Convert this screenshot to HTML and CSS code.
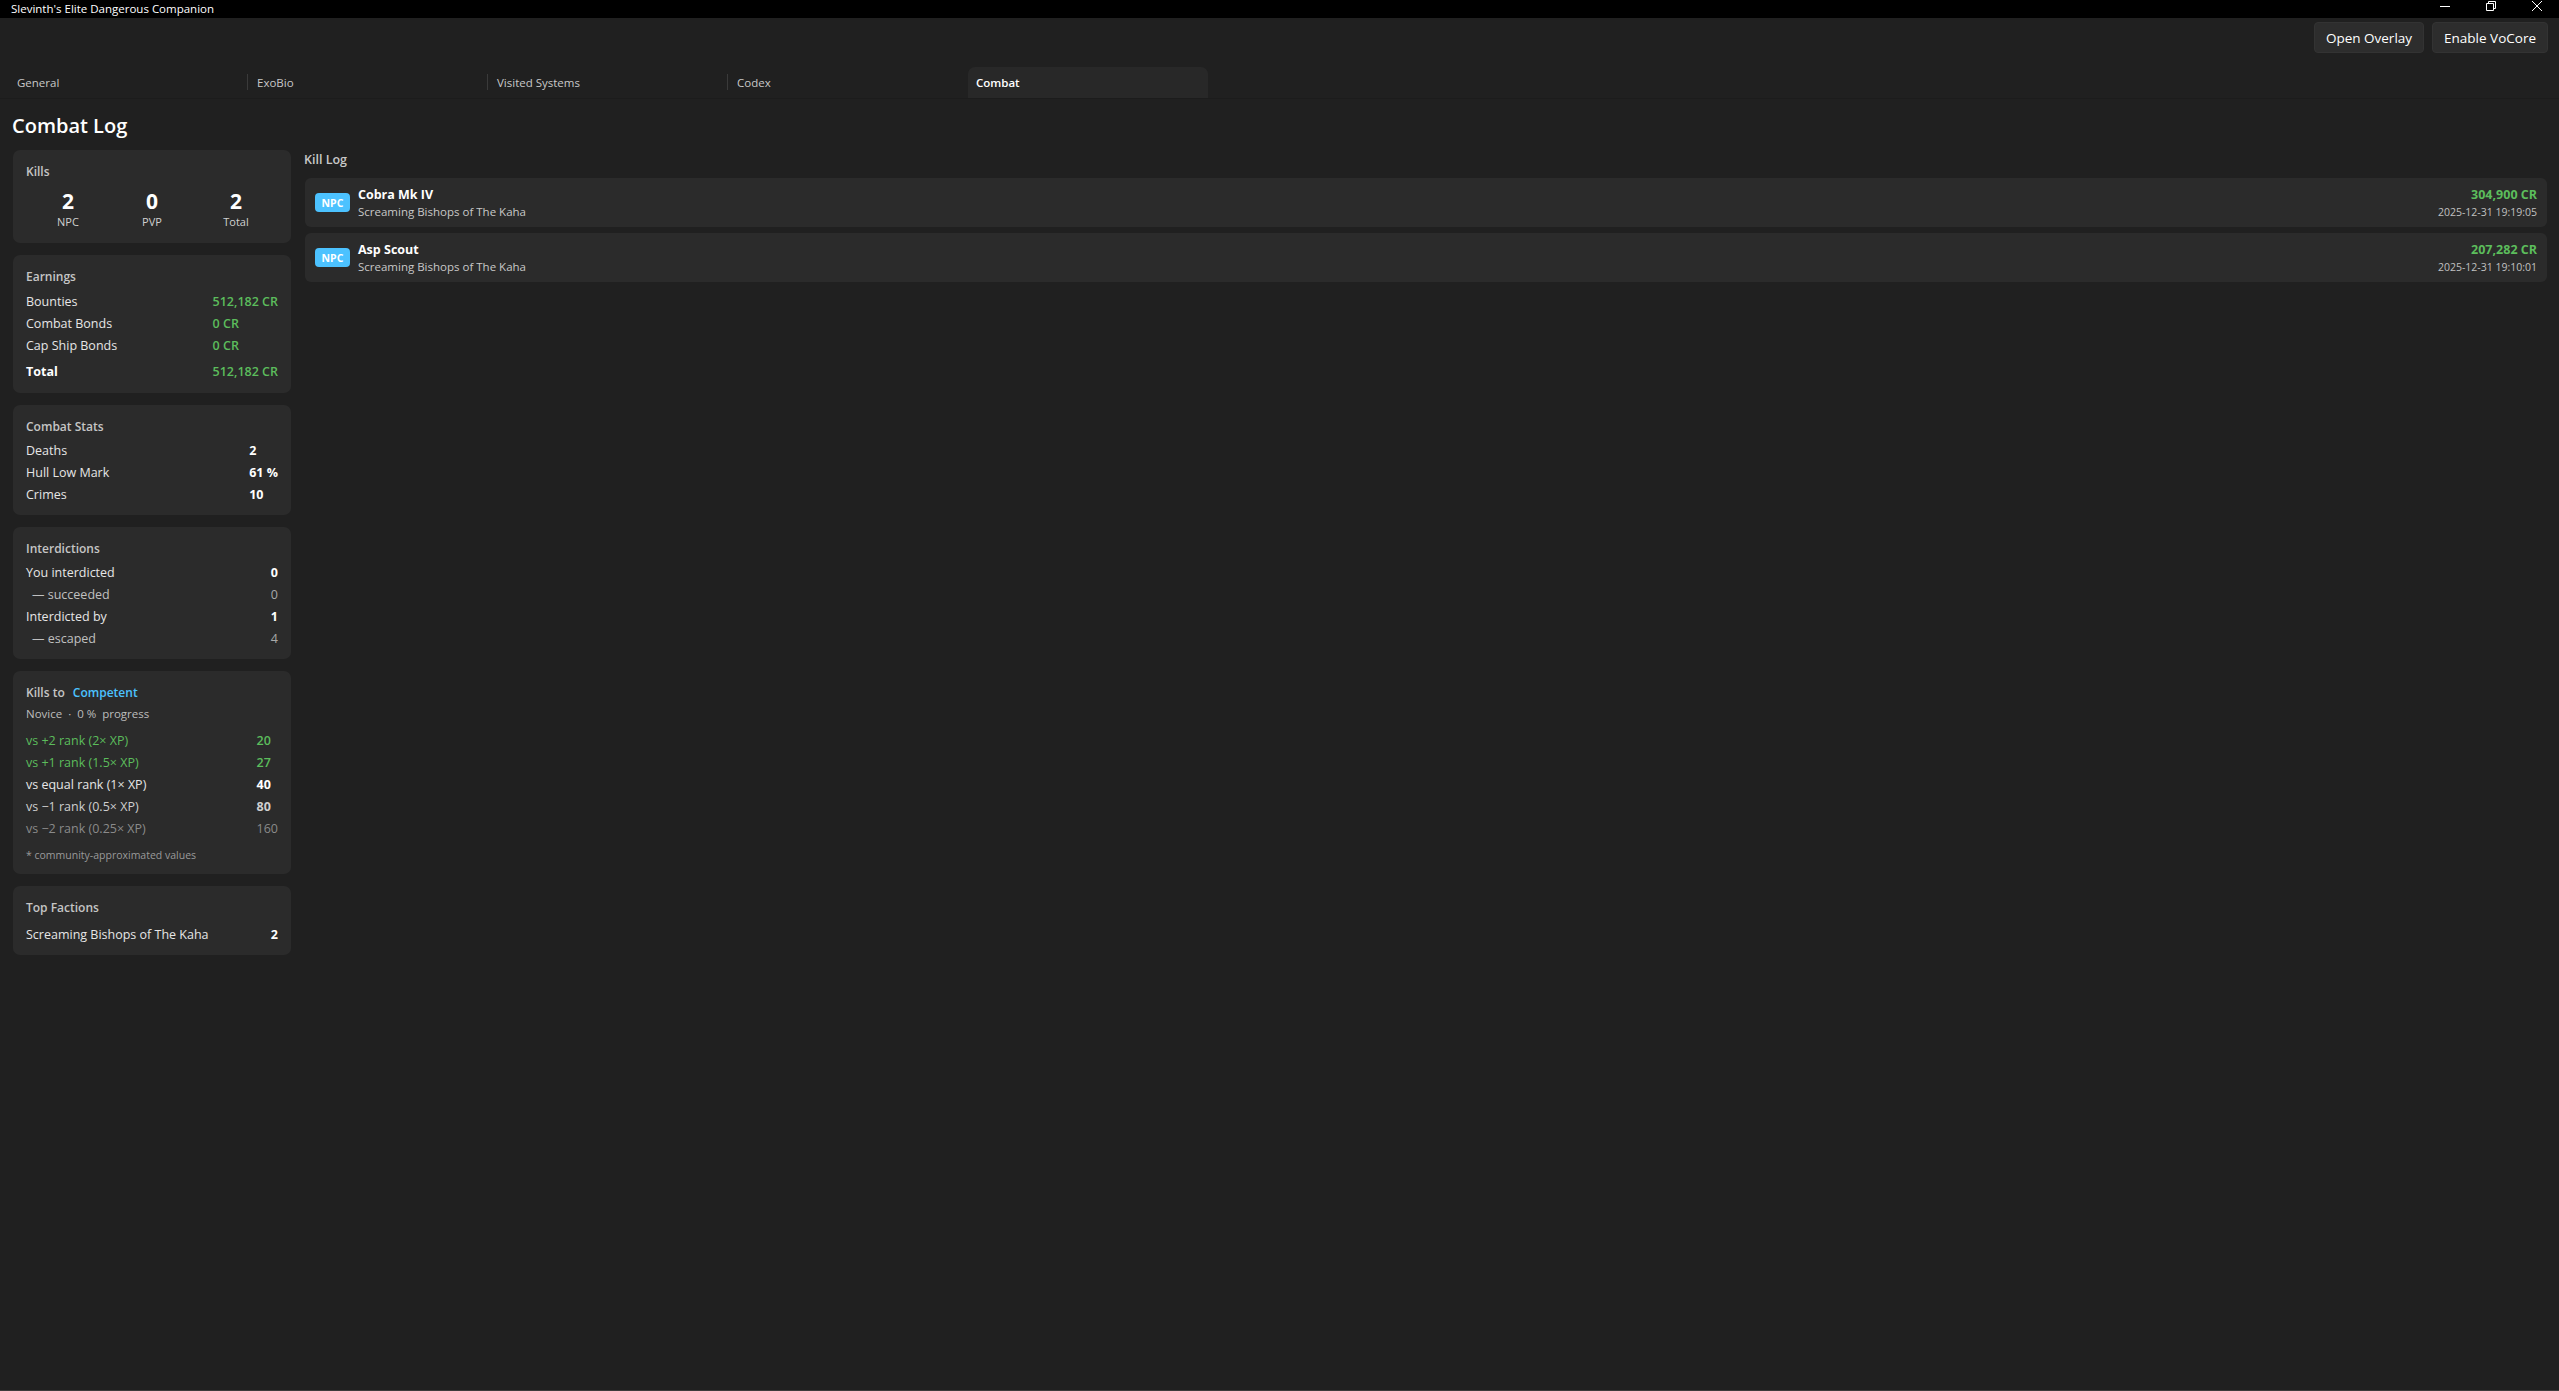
FILE: index.html
```html
<!DOCTYPE html>
<html lang="en">
<head>
<meta charset="utf-8">
<title>Slevinth's Elite Dangerous Companion</title>
<link rel="stylesheet" href="styles.css">
</head>
<body>
<div class="window">
  <div class="titlebar">
    <span class="app-title">Slevinth's Elite Dangerous Companion</span>
    <div class="win-controls">
      <svg class="wc" width="12" height="12" viewBox="0 0 12 12"><path d="M1 6.5H11" stroke="#fff" stroke-width="1"/></svg>
      <svg class="wc" width="12" height="12" viewBox="0 0 12 12"><path d="M1.5 3.5H8.5V10.5H1.5Z M3.5 3.5V1.5H10.5V8.5H8.5" fill="none" stroke="#fff" stroke-width="1"/></svg>
      <svg class="wc" width="12" height="12" viewBox="0 0 12 12"><path d="M1 1L11 11M11 1L1 11" stroke="#fff" stroke-width="1"/></svg>
    </div>
  </div>

  <div class="toolbar">
    <button class="btn">Open Overlay</button>
    <button class="btn">Enable VoCore</button>
  </div>

  <div class="tabstrip">
    <div class="tab">General</div>
    <div class="tab sep">ExoBio</div>
    <div class="tab sep">Visited Systems</div>
    <div class="tab sep">Codex</div>
    <div class="tab active">Combat</div>
  </div>

  <main class="content">
    <h1 class="page-title">Combat Log</h1>
    <div class="columns">
      <aside class="side">
        <section class="card">
          <div class="card-title">Kills</div>
          <div class="kills">
            <div class="kstat"><div class="knum">2</div><div class="klabel">NPC</div></div>
            <div class="kstat"><div class="knum">0</div><div class="klabel">PVP</div></div>
            <div class="kstat"><div class="knum">2</div><div class="klabel">Total</div></div>
          </div>
        </section>

        <section class="card earnings">
          <div class="card-title">Earnings</div>
          <div class="grid">
            <span>Bounties</span><span class="v green">512,182 CR</span>
            <span>Combat Bonds</span><span class="v green">0 CR</span>
            <span>Cap Ship Bonds</span><span class="v green">0 CR</span>
            <span class="b total">Total</span><span class="v green b total">512,182 CR</span>
          </div>
        </section>

        <section class="card">
          <div class="card-title">Combat Stats</div>
          <div class="grid">
            <span>Deaths</span><span class="v b">2</span>
            <span>Hull Low Mark</span><span class="v b">61 %</span>
            <span>Crimes</span><span class="v b">10</span>
          </div>
        </section>

        <section class="card">
          <div class="card-title">Interdictions</div>
          <div class="grid right">
            <span>You interdicted</span><span class="v b">0</span>
            <span class="sub">— succeeded</span><span class="v dim">0</span>
            <span>Interdicted by</span><span class="v b">1</span>
            <span class="sub">— escaped</span><span class="v dim">4</span>
          </div>
        </section>

        <section class="card ranks-card">
          <div class="card-title">Kills to <span class="rank">Competent</span></div>
          <div class="subtitle">Novice &nbsp;·&nbsp; 0 % &nbsp;progress</div>
          <div class="grid ranks">
            <span class="green">vs +2 rank (2× XP)</span><span class="v green b">20</span>
            <span class="green">vs +1 rank (1.5× XP)</span><span class="v green b">27</span>
            <span>vs equal rank (1× XP)</span><span class="v b">40</span>
            <span class="lgrey">vs −1 rank (0.5× XP)</span><span class="v lgrey b">80</span>
            <span class="dgrey">vs −2 rank (0.25× XP)</span><span class="v dgrey">160</span>
          </div>
          <div class="footnote">* community-approximated values</div>
        </section>

        <section class="card factions">
          <div class="card-title">Top Factions</div>
          <div class="grid right">
            <span>Screaming Bishops of The Kaha</span><span class="v b">2</span>
          </div>
        </section>
      </aside>

      <section class="killlog">
        <div class="section-title">Kill Log</div>
        <div class="rows">
          <div class="krow">
            <span class="badge">NPC</span>
            <div class="kinfo">
              <div class="ship">Cobra Mk IV</div>
              <div class="faction">Screaming Bishops of The Kaha</div>
            </div>
            <div class="kright">
              <div class="amount">304,900 CR</div>
              <div class="date">2025-12-31 19:19:05</div>
            </div>
          </div>
          <div class="krow">
            <span class="badge">NPC</span>
            <div class="kinfo">
              <div class="ship">Asp Scout</div>
              <div class="faction">Screaming Bishops of The Kaha</div>
            </div>
            <div class="kright">
              <div class="amount">207,282 CR</div>
              <div class="date">2025-12-31 19:10:01</div>
            </div>
          </div>
        </div>
      </section>
    </div>
  </main>
</div>
</body>
</html>
```

FILE: styles.css
```css
* { box-sizing: border-box; }
html, body { margin: 0; padding: 0; height: 100%; }
body {
  background: #202020;
  color: #e6e6e6;
  font-family: "Segoe UI", "Open Sans", "Noto Sans", sans-serif;
  font-size: 13px;
}
.window {
  height: 1391px;
  display: flex;
  flex-direction: column;
  border-bottom: 1px solid #3c3c3c;
}
.titlebar {
  height: 18px;
  background: #000;
  display: flex;
  align-items: center;
  justify-content: space-between;
  padding-left: 11px;
}
.app-title { font-size: 11.5px; color: #fff; line-height: 18px; }
.win-controls { display: flex; align-items: center; height: 18px; margin-top: -6px; }
.wc { display: block; margin-left: 34px; }
.wc:last-child { margin-right: 16px; }

.toolbar {
  height: 49px;
  display: flex;
  justify-content: flex-end;
  align-items: flex-start;
  gap: 8px;
  padding: 4px 11px 0 0;
}
.btn {
  height: 31px;
  padding: 0 11px;
  background: #2d2d2d;
  border: 1px solid #333;
  border-radius: 4px;
  color: #fff;
  font-family: inherit;
  font-size: 13.5px;
}

.tabstrip {
  height: 32px;
  display: flex;
  padding-left: 7px;
  border-bottom: 1px solid #1c1c1c;
}
.tab {
  width: 240px;
  height: 31px;
  padding-left: 10px;
  display: flex;
  align-items: center;
  font-size: 11.5px;
  color: #c8c8c8;
  position: relative;
}
.tab.sep::before {
  content: "";
  position: absolute;
  left: 0;
  top: 7px;
  width: 1px;
  height: 16px;
  background: #3a3a3a;
}
.tab.active {
  background: #282828;
  border-radius: 7px 7px 0 0;
  color: #fff;
  font-weight: 600;
  padding-left: 8px;
  margin-left: 1px;
}

.content { flex: 1; padding: 0 12px 0 13px; }
.page-title {
  margin: 0;
  font-size: 20px;
  font-weight: 600;
  color: #fff;
  line-height: 30px;
  padding-top: 12px;
  margin-left: -1px;
}
.columns {
  display: flex;
  gap: 14px;
  margin-top: 9px;
  align-items: flex-start;
}
.side { width: 278px; display: flex; flex-direction: column; gap: 12px; }
.card {
  background: #2b2b2b;
  border-radius: 7px;
  padding: 13px 13px 9px;
}
.card-title {
  font-size: 12px;
  font-weight: 600;
  color: #c5c5c5;
  line-height: 17px;
  margin-bottom: 5px;
}
.kills { display: grid; grid-template-columns: repeat(3, 1fr); margin-top: 8px; padding-bottom: 4px; }
.kstat { text-align: center; }
.knum { font-size: 21px; font-weight: 700; color: #fff; line-height: 26px; }
.klabel { font-size: 11px; color: #d0d0d0; line-height: 16px; }

.grid {
  display: grid;
  grid-template-columns: 1fr auto;
  line-height: 22px;
  font-size: 12.5px;
}
.grid .v { justify-self: start; }
.grid.right .v { justify-self: end; }
.b { font-weight: 700; }
.v { color: #fff; }
.green, .v.green { color: #5cbd5c; }
.v.green { font-weight: 600; }
.dim, .v.dim { color: #a8a8a8; font-weight: 400; }
.sub { color: #c0c0c0; padding-left: 6px; }
.total { margin-top: 4px; color: #fff; }
.earnings { padding-bottom: 10px; }
.earnings .card-title { margin-bottom: 6px; }
.rank { color: #4cc2ff; margin-left: 5px; }
.ranks-card .card-title { margin-bottom: 4px; }
.subtitle { font-size: 11.5px; color: #bdbdbd; line-height: 17px; margin-bottom: 8px; }
.lgrey, .v.lgrey { color: #cfcfcf; }
.dgrey, .v.dgrey { color: #8a8a8a; }
.footnote { font-size: 10.5px; color: #9a9a9a; line-height: 16px; margin-top: 7px; padding-bottom: 2px; }
.factions .card-title { margin-bottom: 8px; }

.killlog { flex: 1; }
.section-title {
  font-size: 12.5px;
  font-weight: 600;
  color: #c8c8c8;
  line-height: 17px;
  margin-top: 1px;
  margin-left: -1px;
}
.rows { display: flex; flex-direction: column; gap: 6px; margin-top: 10px; }
.krow {
  height: 49px;
  background: #2b2b2b;
  border-radius: 6px;
  display: flex;
  align-items: center;
  padding: 0 10px;
}
.badge {
  width: 35px;
  height: 19px;
  border-radius: 4px;
  background: #4cc2ff;
  color: #fff;
  font-size: 10.5px;
  font-weight: 700;
  display: flex;
  align-items: center;
  justify-content: center;
}
.kinfo { margin-left: 8px; flex: 1; padding-top: 2px; }
.ship { font-size: 12.5px; font-weight: 700; color: #fff; line-height: 17px; }
.faction { font-size: 11.5px; color: #c8c8c8; line-height: 18px; }
.kright { text-align: right; padding-top: 2px; }
.amount { font-size: 12.5px; font-weight: 700; color: #5cbd5c; line-height: 17px; }
.date { font-size: 10.5px; color: #c0c0c0; line-height: 18px; }
```
